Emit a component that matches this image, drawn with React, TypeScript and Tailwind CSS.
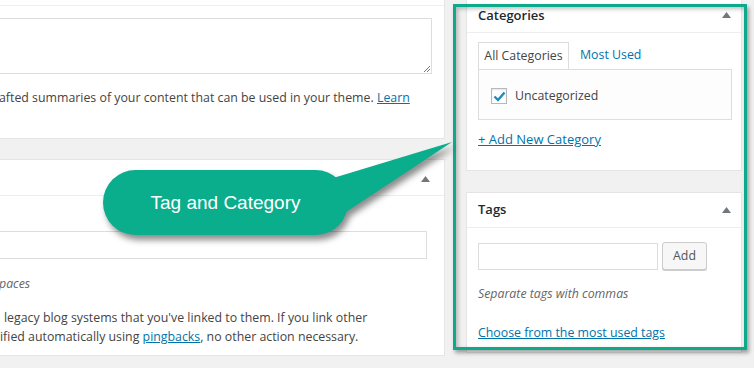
import React from 'react';

const font = { fontFamily: '"Open Sans", "Noto Sans", sans-serif' };

function Arrow() {
  return (
    <svg width="9" height="6" viewBox="0 0 9 6" className="block">
      <path d="M4.5 0 L9 6 L0 6 Z" fill="#72777c" />
    </svg>
  );
}

export default function App() {
  return (
    <div
      className="relative w-[754px] h-[368px] overflow-hidden bg-[#f1f1f1] text-[12.35px] text-[#444]"
      style={font}
    >
      <div className="flex">
        {/* left column */}
        <div className="w-[445px] shrink-0">
          <div className="h-[139px] bg-white border-b border-r border-[#e5e5e5]">
            <div className="h-[6px] border-b border-[#eee]" />
            <div className="pt-[12px] pr-[12px]">
              <div className="relative h-[56px] -ml-[20px] border border-[#ddd] bg-white">
                <svg className="absolute right-[1px] bottom-[1px]" width="7" height="7" viewBox="0 0 7 7">
                  <path d="M1 7 L7 1 M4 7 L7 4" stroke="#777" strokeWidth="1" />
                </svg>
              </div>
              <p className="mt-[15px] -ml-[1px] whitespace-nowrap">
                afted summaries of your content that can be used in your theme.{' '}
                <a className="text-[#0073aa] underline">Learn</a>
              </p>
            </div>
          </div>
          <div className="mt-[20px] h-[197px] bg-white border-t border-r border-b border-[#e5e5e5]">
            <div className="h-[36px] border-b border-[#eee] flex items-center justify-end pr-[14px] pt-[2px]">
              <Arrow />
            </div>
            <div className="pr-[17px] pt-[35px]">
              <div className="h-[28px] -ml-[10px] border border-[#ddd] bg-white" />
              <p className="mt-[16px] italic text-[#666] -ml-[1px]">paces</p>
              <p className="mt-[14px] leading-[19px] whitespace-nowrap">
                <span className="ml-[4px]">legacy blog systems that you've linked to them. If you link other</span>
                <br />
                ified automatically using <a className="text-[#0073aa] underline">pingbacks</a>, no other action
                necessary.
              </p>
            </div>
          </div>
        </div>

        {/* right column */}
        <div className="ml-[21px] w-[276px] shrink-0">
          <div className="h-[171px] bg-white border border-t-0 border-[#e5e5e5]">
            <div className="h-[33px] border-b border-[#eee] flex items-start justify-between pl-[11px] pr-[10px] pt-[5px]">
              <span className="text-[13px] leading-[20px] font-semibold text-[#23282d]">Categories</span>
              <span className="pt-[7px]">
                <Arrow />
              </span>
            </div>
            <div className="px-[11px] pt-[9px]">
              <div className="flex">
                <div className="h-[27px] w-[91px] border border-b-0 border-[#ddd] bg-white flex items-center justify-center relative z-10 -mb-px">
                  All Categories
                </div>
                <div className="h-[27px] pl-[11px] flex items-center text-[#0073aa]">Most Used</div>
              </div>
              <div className="h-[51px] w-[254px] border border-[#ddd] bg-[#fdfdfd] flex items-center pl-[12px] pt-[3px]">
                <span className="w-[16px] h-[16px] border border-[#b4b9be] bg-white flex items-center justify-center shadow-[inset_0_1px_2px_rgba(0,0,0,0.1)]">
                  <svg width="13" height="11" viewBox="0 0 13 11">
                    <path d="M1.5 5.5 L5 9 L11.5 1.5" fill="none" stroke="#1e8cbe" strokeWidth="2.4" />
                  </svg>
                </span>
                <span className="ml-[8px]">Uncategorized</span>
              </div>
              <a className="block mt-[10px] text-[13px] text-[#0073aa] underline">+ Add New Category</a>
            </div>
          </div>

          <div className="mt-[21px] h-[161px] bg-white border border-[#e5e5e5]">
            <div className="h-[35px] border-b border-[#eee] flex items-center justify-between pl-[11px] pr-[10px]">
              <span className="text-[13px] font-semibold text-[#23282d]">Tags</span>
              <Arrow />
            </div>
            <div className="px-[11px] pt-[14px]">
              <div className="flex items-center">
                <div className="w-[180px] h-[27px] border border-[#ddd] bg-white" />
                <button className="ml-[4px] w-[45px] h-[28px] rounded-[3px] border border-[#ccc] bg-[#f7f7f7] text-[#555] shadow-[0_1px_0_#ccc]">
                  Add
                </button>
              </div>
              <p className="mt-[15px] italic text-[#666]">Separate tags with commas</p>
              <a className="block mt-[20px] text-[#0073aa] underline">Choose from the most used tags</a>
            </div>
          </div>
        </div>
      </div>

      {/* annotation: green frame */}
      <div className="absolute left-[453px] top-[4px] w-[294px] h-[346px] border-[3px] border-[#0caa8b] shadow-[2px_3px_4px_rgba(0,0,0,0.35),inset_2px_2px_4px_rgba(0,0,0,0.25)]" />

      {/* annotation: callout */}
      <svg
        className="absolute left-0 top-0 drop-shadow-[3px_5px_3px_rgba(0,0,0,0.45)]"
        width="754"
        height="368"
        viewBox="0 0 754 368"
      >
        <rect x="103" y="170" width="245" height="65" rx="32.5" fill="#0aad8c" />
        <polygon points="320,182 452,142 346,212" fill="#0aad8c" />
      </svg>
      <div
        className="absolute left-[103px] top-[170px] w-[245px] h-[65px] flex items-center justify-center text-white text-[19px] pt-[2px]"
        style={{ fontFamily: '"Liberation Sans", Arial, sans-serif' }}
      >
        Tag and Category
      </div>
    </div>
  );
}
